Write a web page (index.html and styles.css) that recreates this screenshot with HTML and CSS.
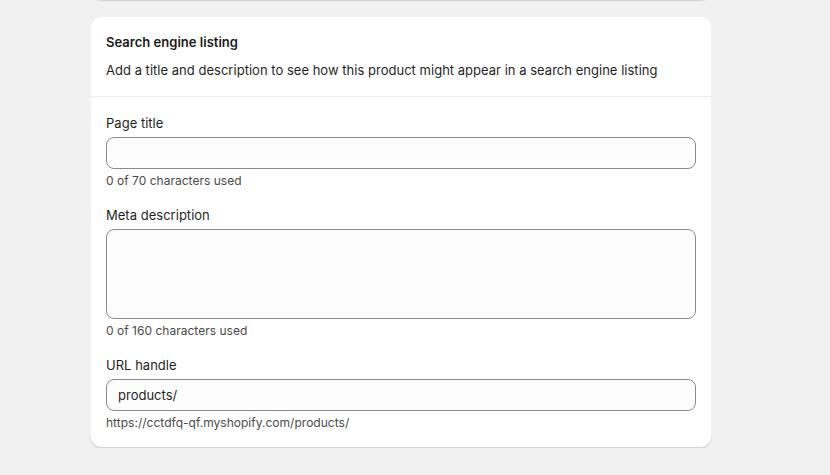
FILE: index.html
```html
<!DOCTYPE html>
<html lang="en">
<head>
<meta charset="utf-8">
<title>Search engine listing</title>
<link rel="stylesheet" href="styles.css">
</head>
<body>
<div class="page">
  <div class="card card-prev"></div>
  <section class="card">
    <header class="card-header">
      <h2 class="card-title">Search engine listing</h2>
      <p class="card-desc">Add a title and description to see how this product might appear in a search engine listing</p>
    </header>
    <div class="card-body">
      <div class="field">
        <label class="label" for="pt">Page title</label>
        <input class="input" id="pt" type="text">
        <div class="help">0 of 70 characters used</div>
      </div>
      <div class="field">
        <label class="label" for="md">Meta description</label>
        <textarea class="input textarea" id="md"></textarea>
        <div class="help">0 of 160 characters used</div>
      </div>
      <div class="field">
        <label class="label" for="uh">URL handle</label>
        <input class="input" id="uh" type="text" value="products/">
        <div class="help">https://cctdfq-qf.myshopify.com/products/</div>
      </div>
    </div>
  </section>
</div>
</body>
</html>
```

FILE: styles.css
```css
* { box-sizing: border-box; }
html, body {
  margin: 0;
  padding: 0;
  background: #f1f1f1;
}
body {
  font-family: Inter, "Noto Sans", Arial, sans-serif;
  font-size: 13px;
  line-height: 20px;
  color: #1f1f1f;
  letter-spacing: 0.02px;
}
.page {
  width: 622px;
  margin-left: 90px;
  display: flex;
  flex-direction: column;
  gap: 16px;
}
.card {
  background: #ffffff;
  border-radius: 12px;
  box-shadow: 0 1px 0 rgba(26, 26, 26, 0.07),
              inset 0 -1px 0 rgba(0, 0, 0, 0.12),
              inset 0 0 0 1px rgba(0, 0, 0, 0.05);
}
.card-prev {
  height: 40px;
  margin-top: -40px;
  box-shadow: 0 1px 1px rgba(26, 26, 26, 0.15),
              inset 0 -1px 0 rgba(0, 0, 0, 0.14);
}
.card-header {
  padding: 16px;
  border-bottom: 1px solid #ebebeb;
  display: flex;
  flex-direction: column;
  gap: 8px;
}
.card-title {
  margin: 0;
  font-size: 13px;
  line-height: 20px;
  font-weight: 600;
  color: #1a1a1a;
}
.card-desc {
  margin: 0;
}
.card-body {
  padding: 16px 16px 17px;
  display: flex;
  flex-direction: column;
  gap: 16px;
}
.field {
  display: flex;
  flex-direction: column;
}
.label {
  margin-bottom: 4px;
}
.input {
  display: block;
  width: 100%;
  height: 32px;
  margin: 0;
  padding: 0 11px;
  border: 1px solid #8a8a8a;
  border-radius: 8px;
  background: #fdfdfd;
  font: inherit;
  font-size: 13px;
  color: #1f1f1f;
  outline: none;
}
.textarea {
  height: 90px;
  resize: none;
  padding: 6px 11px;
}
.help {
  margin-top: 4px;
  font-size: 12px;
  line-height: 16px;
  color: #4a4a4a;
}
```
